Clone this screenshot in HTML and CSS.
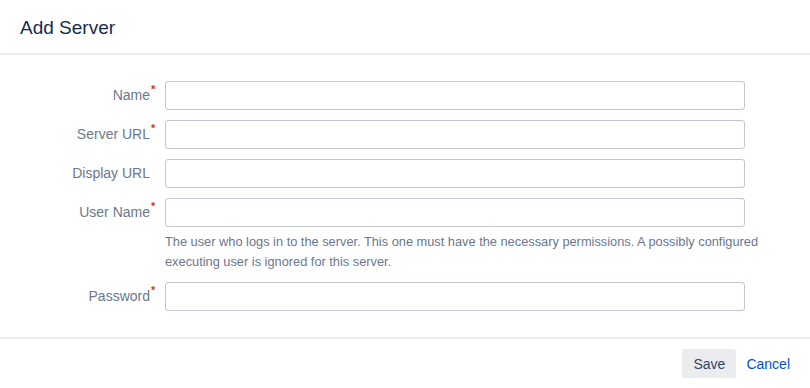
FILE: index.html
```html
<!DOCTYPE html>
<html lang="en">
<head>
    <meta charset="UTF-8">
    <meta name="viewport" content="width=device-width, initial-scale=1.0">
    <title>Add Server</title>
    <link rel="stylesheet" href="styles.css">
</head>
<body>
    <div class="dialog">
        <div class="dialog-header">
            <h2>Add Server</h2>
        </div>

        <form class="dialog-body">
            <div class="field">
                <label for="name">Name<span class="req">*</span></label>
                <input type="text" id="name">
            </div>
            <div class="field">
                <label for="url">Server URL<span class="req">*</span></label>
                <input type="text" id="url">
            </div>
            <div class="field">
                <label for="display">Display URL</label>
                <input type="text" id="display">
            </div>
            <div class="field">
                <label for="user">User Name<span class="req">*</span></label>
                <input type="text" id="user">
                <div class="description">
                    The user who logs in to the server. This one must have the necessary permissions. A possibly configured executing user is ignored for this server.
                </div>
            </div>
            <div class="field">
                <label for="password">Password<span class="req">*</span></label>
                <input type="password" id="password">
            </div>
        </form>

        <div class="dialog-footer">
            <button class="btn">Save</button>
            <a href="#" class="cancel">Cancel</a>
        </div>
    </div>
</body>
</html>
```

FILE: styles.css
```css
body {
    margin: 0;
    font-family: "Liberation Sans", Arial, sans-serif;
    font-size: 14px;
    color: #172b4d;
    background: white;
}

.dialog-header {
    height: 53px;
    padding: 0 20px;
    display: flex;
    align-items: center;
    border-bottom: 2px solid #ebecf0;
}

.dialog-header h2 {
    margin: 0;
    font-size: 19px;
    font-weight: normal;
    color: #172b4d;
    padding-top: 2px;
}

.dialog-body {
    padding: 26px 0 26px;
    margin: 0;
}

.field {
    display: grid;
    grid-template-columns: 150px 580px;
    column-gap: 15px;
    margin-bottom: 10px;
}

.field:last-child {
    margin-bottom: 0;
}

.field label {
    text-align: right;
    line-height: 29px;
    color: #6b778c;
    position: relative;
}

.req {
    position: absolute;
    top: -6px;
    left: 100%;
    margin-left: 1px;
    color: #de350b;
    font-size: 11px;
    font-weight: bold;
}

.field input {
    box-sizing: border-box;
    height: 29px;
    width: 580px;
    border: 1px solid #c1c7d0;
    border-radius: 3px;
    padding: 0 6px;
    font: inherit;
    background: white;
}

.description {
    grid-column: 2;
    width: 610px;
    margin-top: 5px;
    font-size: 12.8px;
    line-height: 20px;
    color: #6b778c;
}

.dialog-footer {
    border-top: 2px solid #ebecf0;
    padding: 10px 20px;
    display: flex;
    justify-content: flex-end;
    align-items: center;
    gap: 10px;
}

.btn {
    height: 29px;
    padding: 0 11px;
    border: none;
    border-radius: 3px;
    background: #ebecf0;
    color: #344563;
    font: inherit;
    font-size: 14px;
    cursor: pointer;
}

.cancel {
    color: #0052cc;
    text-decoration: none;
}
```
